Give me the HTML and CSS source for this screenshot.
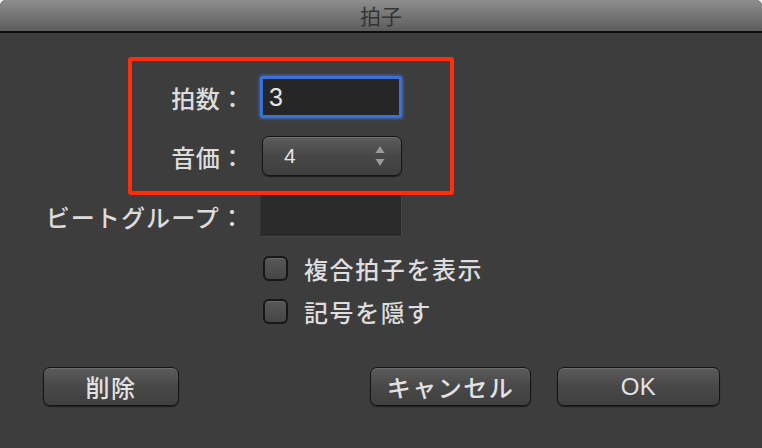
FILE: index.html
```html
<!DOCTYPE html>
<html lang="ja">

<head>
    <meta charset="UTF-8">
    <meta name="viewport" content="width=device-width, initial-scale=1.0">
    <title>拍子</title>
    <link rel="stylesheet" href="styles.css">
</head>

<body>
    <div class="window">
        <div class="titlebar">拍子</div>

        <div class="form">
            <div class="row">
                <div class="label">拍数：</div>
                <div class="field focused">3</div>
            </div>
            <div class="row">
                <div class="label">音価：</div>
                <div class="popup">
                    <span>4</span>
                    <svg class="arrows" width="10" height="22" viewBox="0 0 10 22">
                        <path d="M5 1 L9.5 8 L0.5 8 Z" fill="#9a9a9a" />
                        <path d="M0.5 14 L9.5 14 L5 21 Z" fill="#9a9a9a" />
                    </svg>
                </div>
            </div>
            <div class="row row-beat">
                <div class="label wide">ビートグループ：</div>
                <div class="field empty"></div>
            </div>

            <label class="check-row first">
                <span class="checkbox"></span>
                <span class="check-text">複合拍子を表示</span>
            </label>
            <label class="check-row second">
                <span class="checkbox"></span>
                <span class="check-text">記号を隠す</span>
            </label>

            <div class="buttons">
                <button class="btn btn-delete">削除</button>
                <div class="spacer"></div>
                <button class="btn btn-cancel">キャンセル</button>
                <button class="btn btn-ok">OK</button>
            </div>
        </div>

        <!-- annotation frame drawn over the dialog -->
        <div class="highlight"></div>
    </div>
</body>

</html>
```

FILE: styles.css
```css
body {
    margin: 0;
    background-color: #f0f0f0;
    font-family: "Noto Sans CJK JP", "Noto Sans", sans-serif;
}

.window {
    position: relative;
    width: 762px;
    height: 448px;
    background-color: #3d3d3d;
    border-radius: 6px 6px 0 0;
    overflow: hidden;
}

.titlebar {
    height: 31px;
    line-height: 31px;
    text-align: center;
    font-size: 21px;
    color: #343434;
    background: linear-gradient(#8e8e8e, #5c5c5c);
    border-bottom: 2px solid #0d0d0d;
}

.form {
    display: flex;
    flex-direction: column;
    padding-top: 42px;
}

.row {
    display: flex;
    align-items: center;
    height: 44px;
}

.row + .row {
    margin-top: 15px;
}

.row-beat {
    margin-top: 16px !important;
}

.label {
    width: 245px;
    text-align: right;
    font-size: 24px;
    font-weight: 500;
    color: #dcdcdc;
    margin-right: 15px;
    letter-spacing: 0.6px;
}

.label.wide {
    letter-spacing: 1.1px;
}

.field {
    box-sizing: border-box;
    width: 142px;
    color: #e4e4e4;
}

.field.focused {
    height: 42px;
    line-height: 36px;
    padding-left: 6px;
    font-family: "Liberation Sans", sans-serif;
    font-size: 25px;
    background-color: #262626;
    border: 3px solid #3a70dc;
    border-radius: 3px;
    box-shadow: 0 0 3px 1px rgba(70, 130, 240, 0.6);
}

.field.empty {
    height: 42px;
    background-color: #2a2a2a;
    border: 1px solid #464646;
    border-top-color: #2a2a2a;
    border-left-color: #333;
}

.popup {
    box-sizing: border-box;
    display: flex;
    align-items: center;
    justify-content: space-between;
    width: 140px;
    height: 40px;
    margin-left: 2px;
    padding: 0 16px 0 21px;
    font-family: "Liberation Sans", sans-serif;
    font-size: 21px;
    color: #e4e4e4;
    border: 1px solid #161616;
    border-radius: 7px;
    background: linear-gradient(#5d5d5d, #474747 50%, #3f3f3f);
    box-shadow: inset 0 1px 0 rgba(255, 255, 255, 0.12), 0 1px 1px rgba(0, 0, 0, 0.5);
}

.arrows {
    display: block;
}

.check-row {
    display: flex;
    align-items: center;
    height: 32px;
    padding-left: 263px;
}

.check-row.first {
    margin-top: 14px;
}

.check-row.second {
    margin-top: 11px;
}

.checkbox {
    box-sizing: border-box;
    width: 25px;
    height: 25px;
    border: 2px solid #171717;
    border-radius: 6px;
    background: linear-gradient(#575757, #464646);
    box-shadow: inset 0 1px 0 rgba(255, 255, 255, 0.1);
}

.check-text {
    margin-left: 16px;
    font-size: 24px;
    font-weight: 500;
    letter-spacing: 1.6px;
    color: #dedede;
}

.buttons {
    display: flex;
    margin-top: 40px;
    padding: 0 42px 0 43px;
    gap: 26px;
}

.spacer {
    flex: 1;
}

.btn {
    box-sizing: border-box;
    height: 39px;
    padding: 0;
    font-family: "Noto Sans CJK JP", "Noto Sans", sans-serif;
    font-size: 24px;
    font-weight: 500;
    letter-spacing: 1.5px;
    color: #e2e2e2;
    border: 1px solid #141414;
    border-radius: 7px;
    background: linear-gradient(#5b5b5b, #484848 50%, #404040);
    box-shadow: inset 0 1px 0 rgba(255, 255, 255, 0.12), 0 1px 1px rgba(0, 0, 0, 0.5);
}

.btn-delete {
    width: 136px;
}

.btn-cancel {
    width: 161px;
}

.btn-ok {
    width: 163px;
    font-family: "Liberation Sans", sans-serif;
    letter-spacing: 0.5px;
}

.highlight {
    position: absolute;
    left: 128px;
    top: 57px;
    width: 326px;
    height: 138px;
    box-sizing: border-box;
    border: 4px solid #ff2d0c;
    border-radius: 3px;
}
```
